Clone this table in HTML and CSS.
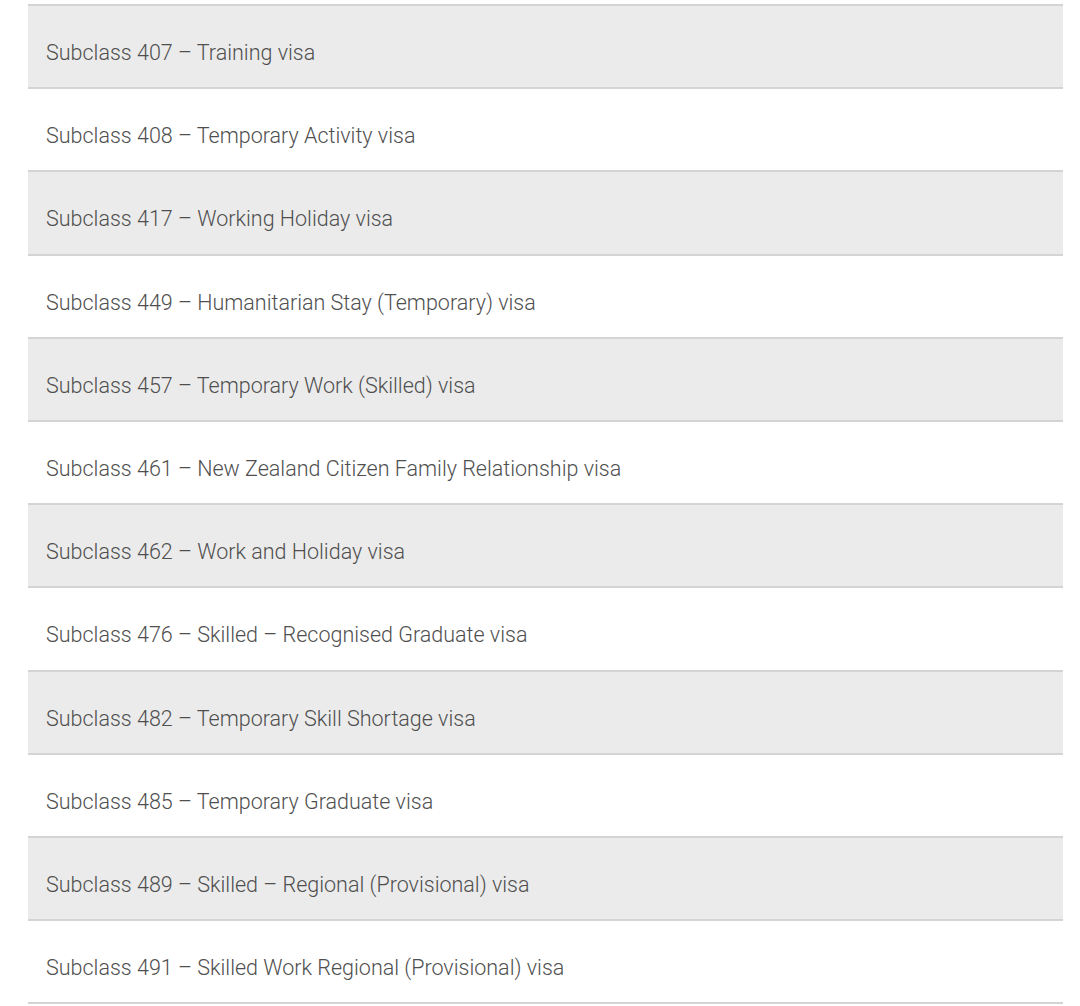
FILE: index.html
```html
<!DOCTYPE html>
<html>
<head>
<meta charset="utf-8">
<link rel="stylesheet" href="styles.css">
</head>
<body>
<div class="list">
  <div class="row shaded">Subclass 407 – Training visa</div>
  <div class="row">Subclass 408 – Temporary Activity visa</div>
  <div class="row shaded">Subclass 417 – Working Holiday visa</div>
  <div class="row">Subclass 449 – Humanitarian Stay (Temporary) visa</div>
  <div class="row shaded">Subclass 457 – Temporary Work (Skilled) visa</div>
  <div class="row">Subclass 461 – New Zealand Citizen Family Relationship visa</div>
  <div class="row shaded">Subclass 462 – Work and Holiday visa</div>
  <div class="row">Subclass 476 – Skilled – Recognised Graduate visa</div>
  <div class="row shaded">Subclass 482 – Temporary Skill Shortage visa</div>
  <div class="row">Subclass 485 – Temporary Graduate visa</div>
  <div class="row shaded">Subclass 489 – Skilled – Regional (Provisional) visa</div>
  <div class="row">Subclass 491 – Skilled Work Regional (Provisional) visa</div>
</div>
</body>
</html>
```
FILE: styles.css
```css
html, body {
  margin: 0;
  padding: 0;
  background: #ffffff;
}
.list {
  margin: 4px 0 0 28px;
  width: 1035px;
  border-bottom: 2px solid #d4d4d4;
}
.row {
  box-sizing: border-box;
  height: 83.2px;
  border-top: 2px solid #d4d4d4;
  display: flex;
  align-items: center;
  padding: 12px 0 0 18px;
  font-family: Roboto, "Liberation Sans", sans-serif;
  font-size: 21.5px;
  font-weight: 300;
  color: #4f4f4f;
}
.shaded {
  background: #ebebeb;
}
```
